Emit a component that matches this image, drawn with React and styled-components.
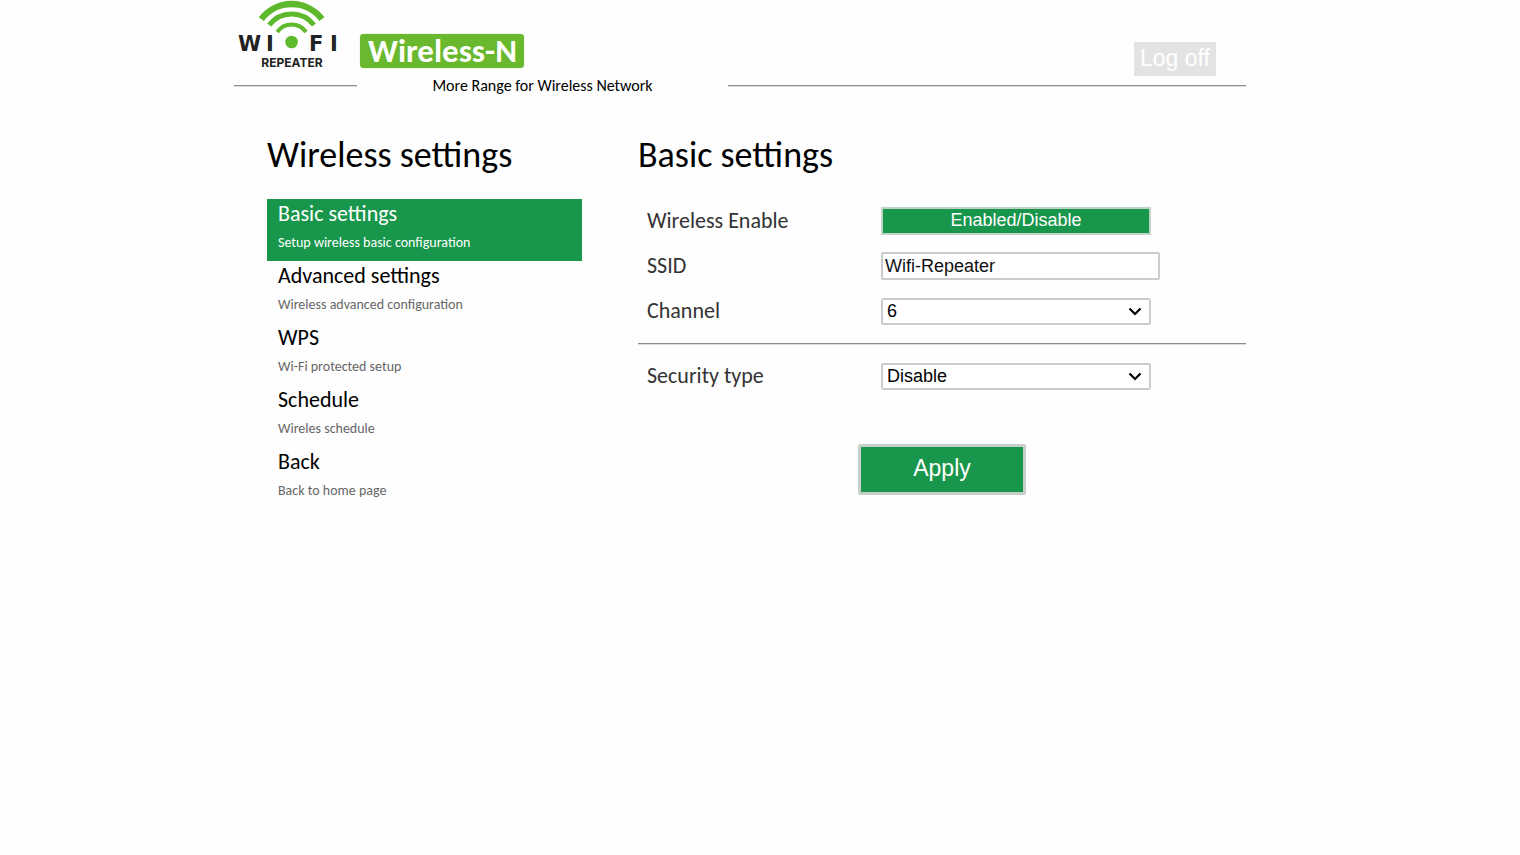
import React from "react";
import styled, { createGlobalStyle } from "styled-components";

const green = "#18964b";
const humanist = `Carlito, Lato, "Open Sans", sans-serif`;
const grotesque = `"Liberation Sans", Arial, sans-serif`;

const GlobalStyle = createGlobalStyle`
  *, *::before, *::after { box-sizing: border-box; }
  body {
    margin: 0;
    background: #fefefe;
    color: #000;
    font-family: ${humanist};
  }
`;

const Page = styled.div`
  max-width: 1052px;
  margin: 0 auto;
  padding-right: 40px;
`;

const Brand = styled.header`
  display: flex;
  align-items: flex-end;
  height: 76px;
  padding: 0 30px 0 4px;
`;

const Logo = styled.svg`
  width: 102px;
  height: 72px;
  margin-bottom: 4px;
  flex: none;
`;

const Badge = styled.span`
  height: 34px;
  margin: 0 auto 8px 20px;
  padding: 0 7px 0 8px;
  border-radius: 4px;
  background: #69b82d;
  color: #fff;
  font-size: 33px;
  font-weight: 700;
  line-height: 34px;
  box-shadow: 0 0 1px #69b82d;
`;

const LogOff = styled.button`
  width: 82px;
  height: 34px;
  padding: 0 0 2px;
  border: 0;
  background: #e3e3e3;
  color: #fff;
  font-family: ${grotesque};
  font-size: 23px;
  line-height: 32px;
`;

const TaglineBar = styled.div`
  display: flex;
  align-items: center;
  height: 20px;
`;

const Rule = styled.hr`
  width: ${(p) => p.$width || "auto"};
  flex: ${(p) => (p.$width ? "none" : "1")};
  margin: 0;
  border: 0;
  border-top: 1px solid #8d8d8d;
  border-bottom: 1px solid #dcdcdc;
`;

const Tagline = styled.p`
  width: 371px;
  margin: 0;
  font-size: 16px;
  line-height: 20px;
  text-align: center;
`;

const Columns = styled.div`
  display: grid;
  grid-template-columns: 315px 1fr;
  gap: 56px;
  padding: 34px 0 0 33px;
`;

const Title = styled.h1`
  margin: 0 0 19px;
  font-size: 36px;
  font-weight: 400;
  line-height: 50px;
`;

const NavItem = styled.a`
  display: block;
  height: 62px;
  padding: 0 11px;
  background: ${(p) => (p.$active ? green : "transparent")};
  color: ${(p) => (p.$active ? "#fff" : "#000")};
  text-decoration: none;
`;

const NavName = styled.span`
  display: block;
  font-size: 22px;
  line-height: 30px;
`;

const NavHint = styled.span`
  display: block;
  color: ${(p) => (p.$active ? "#fff" : "#666")};
  font-size: 14px;
  line-height: 28px;
`;

const Form = styled.form`
  display: flex;
  flex-direction: column;
`;

const Field = styled.div`
  display: grid;
  grid-template-columns: 234px 1fr;
  align-items: center;
  height: 45px;
  padding: 0 0 1px 9px;
`;

const Label = styled.label`
  color: #333;
  font-size: 22px;
  line-height: 30px;
`;

const Divider = styled.hr`
  width: 100%;
  margin: 9px 0;
  border: 0;
  border-top: 1px solid #8d8d8d;
  border-bottom: 1px solid #dcdcdc;
`;

const Toggle = styled.button`
  width: 270px;
  height: 28px;
  padding: 0 0 2px;
  border: 2px solid #bfd3c6;
  background: ${green};
  color: #fff;
  font-family: ${grotesque};
  font-size: 18px;
  line-height: 22px;
`;

const TextBox = styled.input`
  width: 279px;
  height: 28px;
  padding: 0 2px;
  border: 2px solid #ccc;
  border-radius: 2px;
  background: #fff;
  color: #111;
  font-family: ${grotesque};
  font-size: 18px;
`;

const PickerBox = styled.div`
  display: grid;
  width: 270px;
  align-items: center;

  > * { grid-area: 1 / 1; }
`;

const Picker = styled.select`
  appearance: none;
  width: 100%;
  height: 27px;
  padding: 0 4px;
  border: 2px solid #ccc;
  border-radius: 2px;
  background: #fff;
  color: #000;
  font-family: ${grotesque};
  font-size: 18px;
`;

const Chevron = styled.svg`
  justify-self: end;
  width: 14px;
  height: 9px;
  margin-right: 9px;
  pointer-events: none;
`;

const Apply = styled.button`
  align-self: center;
  width: 168px;
  height: 51px;
  margin-top: 45px;
  padding: 0 0 2px;
  border: 3px solid #c6cfc9;
  border-radius: 2px;
  background: ${green};
  color: #fff;
  font-family: ${grotesque};
  font-size: 23px;
`;

const navItems = [
  { name: "Basic settings", hint: "Setup wireless basic configuration", active: true },
  { name: "Advanced settings", hint: "Wireless advanced configuration" },
  { name: "WPS", hint: "Wi-Fi protected setup" },
  { name: "Schedule", hint: "Wireles schedule" },
  { name: "Back", hint: "Back to home page" },
];

function WifiLogo() {
  return (
    <Logo viewBox="0 0 102 72" role="img" aria-label="WI-FI Repeater">
      <g fill="none" stroke="#5fb92c">
        <path d="M23.3 19.1 A38 38 0 0 1 83.9 19.1" strokeWidth="6.4" />
        <path d="M31.2 25.1 A28 28 0 0 1 76 25.1" strokeWidth="5" />
        <path d="M39.2 32 A17.5 17.5 0 0 1 68 32" strokeWidth="4" />
      </g>
      <circle cx="53.6" cy="42" r="6.3" fill="#5fb92c" />
      <g fill="#222" fontWeight="700">
        <g fontFamily="DejaVu Sans, sans-serif" fontSize="21">
          <text x="0" y="51">W</text>
          <text x="28" y="51">I</text>
          <text x="71" y="51">F</text>
          <text x="92" y="51">I</text>
        </g>
        <text x="54" y="67" fontFamily="Inter, sans-serif" fontSize="12" textAnchor="middle">
          REPEATER
        </text>
      </g>
    </Logo>
  );
}

function Select({ id, options, value }) {
  return (
    <PickerBox>
      <Picker id={id} defaultValue={value}>
        {options.map((option) => (
          <option key={option}>{option}</option>
        ))}
      </Picker>
      <Chevron viewBox="0 0 14 9" aria-hidden="true">
        <path d="M1.5 1.5 L7 7 L12.5 1.5" fill="none" stroke="#000" strokeWidth="2.2" />
      </Chevron>
    </PickerBox>
  );
}

const channels = Array.from({ length: 13 }, (_, i) => String(i + 1));

export default function App() {
  return (
    <>
      <GlobalStyle />
      <Page>
        <Brand>
          <WifiLogo />
          <Badge>Wireless-N</Badge>
          <LogOff type="button">Log off</LogOff>
        </Brand>
        <TaglineBar>
          <Rule $width="123px" />
          <Tagline>More Range for Wireless Network</Tagline>
          <Rule />
        </TaglineBar>
        <Columns>
          <nav aria-label="Wireless settings">
            <Title>Wireless settings</Title>
            {navItems.map((item) => (
              <NavItem key={item.name} href="#" $active={item.active}>
                <NavName>{item.name}</NavName>
                <NavHint $active={item.active}>{item.hint}</NavHint>
              </NavItem>
            ))}
          </nav>
          <main>
            <Title as="h2">Basic settings</Title>
            <Form onSubmit={(e) => e.preventDefault()}>
              <Field>
                <Label htmlFor="enable">Wireless Enable</Label>
                <Toggle id="enable" type="button">Enabled/Disable</Toggle>
              </Field>
              <Field>
                <Label htmlFor="ssid">SSID</Label>
                <TextBox id="ssid" type="text" defaultValue="Wifi-Repeater" />
              </Field>
              <Field>
                <Label htmlFor="channel">Channel</Label>
                <Select id="channel" options={channels} value="6" />
              </Field>
              <Divider />
              <Field>
                <Label htmlFor="security">Security type</Label>
                <Select id="security" options={["Disable", "WPA2-PSK"]} value="Disable" />
              </Field>
              <Apply type="submit">Apply</Apply>
            </Form>
          </main>
        </Columns>
      </Page>
    </>
  );
}
